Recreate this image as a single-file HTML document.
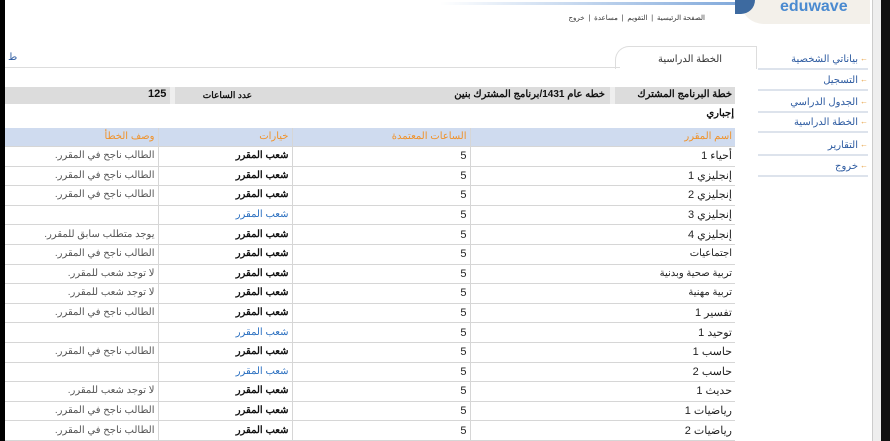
<!DOCTYPE html>
<html><head><meta charset="utf-8"><style>
body{margin:0;width:890px;height:441px;overflow:hidden;background:#fff;position:relative;font-family:"Liberation Sans","Noto Sans CJK SC",sans-serif;font-size:10px;color:#222}
.a{position:absolute}
table{border-collapse:collapse;position:absolute;left:5px;top:128px;width:730px;direction:rtl;table-layout:fixed}
td{height:18.6px;line-height:12px;padding:0 3px;border-bottom:1px solid #d6d6d6;font-size:10px;white-space:nowrap;overflow:hidden;box-sizing:content-box}
td.v{border-left:1px solid #d6d6d6}
tr.h td{background:#cfdbef;color:#f0922a;height:18px}
.b{font-weight:bold;color:#111}
.bl{color:#2a6fc0}
.g{color:#555}
.n{font-size:11px}
.side div{position:absolute;right:22px;font-size:10px;color:#2c5aa0;direction:rtl;width:100px;text-align:right;border-bottom:2px solid #dde3ec;padding-bottom:3px;padding-right:10px}
.side div:before{content:"\2190";color:#e8a040;position:absolute;right:0;top:0;font-size:8px;direction:ltr}
</style></head><body>
<div class="a" style="left:0;top:0;width:5px;height:441px;background:#000"></div>
<div class="a" style="left:880px;top:0;width:10px;height:441px;background:#111"></div>
<div class="a" style="left:872px;top:0;width:8px;height:441px;background:#eee;border-left:1px solid #ccc"></div>
<div class="a" style="left:440px;top:2px;width:390px;height:3px;background:linear-gradient(90deg,#fff,#5b8fd0)"></div>
<div class="a" style="left:740px;top:0;width:130px;height:24px;background:#f3f0ea;border-radius:0 0 0 40px"></div>
<div class="a" style="left:735px;top:0;width:20px;height:14px;background:#3d6aa0;border-radius:0 0 20px 0"></div>
<div class="a" style="left:780px;top:0;font-size:16px;font-weight:bold;color:#4a8ad0;line-height:14px">eduwave</div>
<div class="a" style="left:505px;top:14px;font-size:7px;color:#333;direction:rtl;width:200px;text-align:right">الصفحة الرئيسية &nbsp;|&nbsp; التقويم &nbsp;|&nbsp; مساعدة &nbsp;|&nbsp; خروج</div>
<div class="a" style="left:8px;top:52px;color:#2c5aa0;font-size:10px">ط</div>
<div class="a" style="left:5px;top:67px;width:615px;height:1px;background:#ddd"></div>
<div class="a" style="left:615px;top:46px;width:140px;height:22px;border:1px solid #ddd;border-bottom:none;border-radius:14px 0 0 0"></div>
<div class="a" style="left:640px;top:54px;width:100px;text-align:center;color:#333;font-size:10px">الخطة الدراسية</div>
<div class="a" style="left:5px;top:87px;width:730px;height:17px;background:#dcdcdc"></div>
<div class="a" style="left:170px;top:87px;width:5px;height:17px;background:#eee"></div>
<div class="a" style="left:610px;top:87px;width:5px;height:17px;background:#eee"></div>
<div class="a b" style="left:620px;top:89px;width:112px;text-align:right;direction:rtl">خطة البرنامج المشترك</div>
<div class="a b" style="left:440px;top:89px;width:165px;text-align:right;direction:rtl">خطه عام 1431/برنامج المشترك بنين</div>
<div class="a b" style="left:180px;top:90px;width:72px;text-align:right;font-size:9px">عدد الساعات</div>
<div class="a b" style="left:148px;top:88px;font-size:11px">125</div>
<div class="a b" style="left:680px;top:108px;width:54px;text-align:right">إجباري</div>
<table>
<colgroup><col style="width:265px"><col style="width:178px"><col style="width:134px"><col style="width:153px"></colgroup>
<tr class="h"><td class="v">اسم المقرر</td><td class="v">الساعات المعتمدة</td><td class="v">خيارات</td><td>وصف الخطأ</td></tr>
<tr><td class="v n">أحياء 1</td><td class="v n">5</td><td class="v b">شعب المقرر</td><td class="g">الطالب ناجح في المقرر.</td></tr>
<tr><td class="v n">إنجليزي 1</td><td class="v n">5</td><td class="v b">شعب المقرر</td><td class="g">الطالب ناجح في المقرر.</td></tr>
<tr><td class="v n">إنجليزي 2</td><td class="v n">5</td><td class="v b">شعب المقرر</td><td class="g">الطالب ناجح في المقرر.</td></tr>
<tr><td class="v n">إنجليزي 3</td><td class="v n">5</td><td class="v bl">شعب المقرر</td><td></td></tr>
<tr><td class="v n">إنجليزي 4</td><td class="v n">5</td><td class="v b">شعب المقرر</td><td class="g">يوجد متطلب سابق للمقرر.</td></tr>
<tr><td class="v">اجتماعيات</td><td class="v n">5</td><td class="v b">شعب المقرر</td><td class="g">الطالب ناجح في المقرر.</td></tr>
<tr><td class="v">تربية صحية وبدنية</td><td class="v n">5</td><td class="v b">شعب المقرر</td><td class="g">لا توجد شعب للمقرر.</td></tr>
<tr><td class="v">تربية مهنية</td><td class="v n">5</td><td class="v b">شعب المقرر</td><td class="g">لا توجد شعب للمقرر.</td></tr>
<tr><td class="v n">تفسير 1</td><td class="v n">5</td><td class="v b">شعب المقرر</td><td class="g">الطالب ناجح في المقرر.</td></tr>
<tr><td class="v n">توحيد 1</td><td class="v n">5</td><td class="v bl">شعب المقرر</td><td></td></tr>
<tr><td class="v n">حاسب 1</td><td class="v n">5</td><td class="v b">شعب المقرر</td><td class="g">الطالب ناجح في المقرر.</td></tr>
<tr><td class="v n">حاسب 2</td><td class="v n">5</td><td class="v bl">شعب المقرر</td><td></td></tr>
<tr><td class="v n">حديث 1</td><td class="v n">5</td><td class="v b">شعب المقرر</td><td class="g">لا توجد شعب للمقرر.</td></tr>
<tr><td class="v n">رياضيات 1</td><td class="v n">5</td><td class="v b">شعب المقرر</td><td class="g">الطالب ناجح في المقرر.</td></tr>
<tr><td class="v n">رياضيات 2</td><td class="v n">5</td><td class="v b">شعب المقرر</td><td class="g">الطالب ناجح في المقرر.</td></tr>
</table>
<div class="side">
<div style="top:54px">بياناتي الشخصية</div>
<div style="top:75px">التسجيل</div>
<div style="top:97px">الجدول الدراسي</div>
<div style="top:117px">الخطة الدراسية</div>
<div style="top:140px">التقارير</div>
<div style="top:161px">خروج</div>
</div>
</body></html>
